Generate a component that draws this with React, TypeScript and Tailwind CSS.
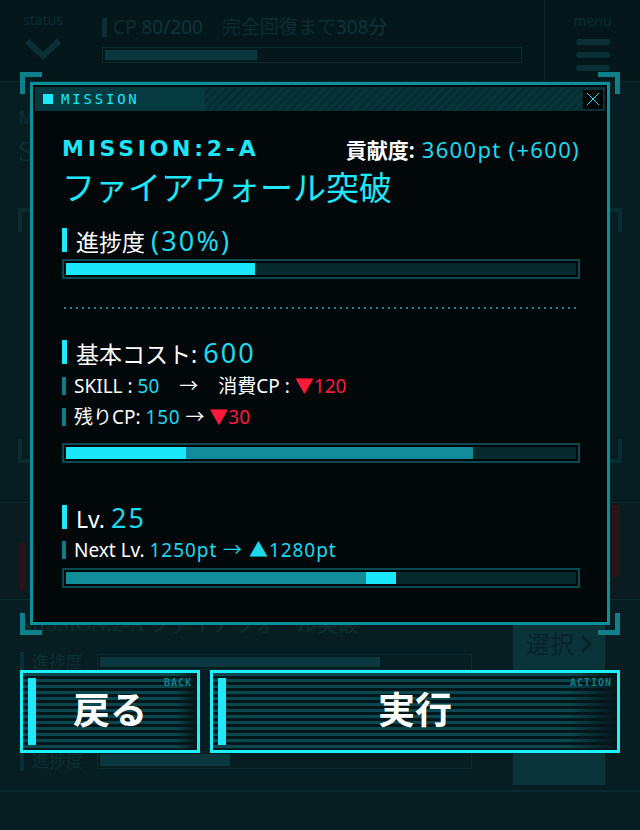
import React from 'react';

const jp = "font-['Noto_Sans','Noto_Sans_CJK_JP',sans-serif]";
const serif = "font-['Liberation_Serif','Noto_Sans_CJK_JP',serif]";

function Bar({ segs }: { segs: { w: number; c: string }[] }) {
  return (
    <div className="h-[20px] border-2 border-[#0c4a51] bg-[#02080a] p-[2px]">
      <div className="h-full bg-[#06292e] flex">
        {segs.map((s, i) => (
          <div key={i} className={`h-full ${s.c}`} style={{ width: s.w }} />
        ))}
      </div>
    </div>
  );
}

function Heading({ label, value }: { label: string; value: string }) {
  return (
    <div className="h-[26px] flex items-center gap-[9px]">
      <div className="w-[5px] h-[24px] bg-[#1ee8fa]" />
      <div className="text-[23px] leading-none text-white whitespace-nowrap">
        {label}
        <span className="text-[27px] tracking-[0.08em] text-[#1ed8ec]">{value}</span>
      </div>
    </div>
  );
}

function SubRow({ children }: { children: React.ReactNode }) {
  return (
    <div className="h-[22px] flex items-center gap-[8px]">
      <div className="w-[4px] h-[18px] bg-[#0e7c86]" />
      <div className="text-[19px] leading-none text-white whitespace-nowrap">{children}</div>
    </div>
  );
}

function Corner({ pos }: { pos: string }) {
  return <div className={`absolute w-[22px] h-[22px] border-[#0f7f89] ${pos}`} />;
}

export default function App() {
  return (
    <div className={`relative w-[640px] h-[830px] overflow-hidden bg-[#061d21] ${jp}`}>
      {/* background page */}
      <header className="h-[82px] flex bg-[#04171a] border-b border-[#0a2a2f]">
        <div className="w-[86px] flex flex-col items-center pt-[9px]">
          <span className="text-[14px] text-[#0a2b30]">status</span>
          <svg width="40" height="26" viewBox="0 0 40 26" className="mt-[6px]">
            <path d="M4 5 L20 20 L36 5" stroke="#0a3035" strokeWidth="6" fill="none" />
          </svg>
        </div>
        <div className="w-[459px] pl-[16px] pt-[18px] border-r border-[#0a2a2f]">
          <div className="flex items-center gap-[6px] text-[19px] leading-none text-[#0b2d32]">
            <div className="w-[5px] h-[19px] bg-[#0a2e33]" />
            <span>CP <span className="text-[#0c353a]">80/200</span>　完全回復まで<span className="text-[#0c353a]">308分</span></span>
          </div>
          <div className="mt-[10px] w-[420px] h-[16px] border border-[#0a2a2f] p-[2px]">
            <div className="h-full w-[152px] bg-[#0a383e]" />
          </div>
        </div>
        <div className="flex-1 flex flex-col items-center pt-[10px]">
          <span className="text-[14px] text-[#0a2b30]">menu</span>
          <div className="mt-[8px] flex flex-col gap-[7px]">
            <div className="w-[34px] h-[6px] rounded-full bg-[#0a3035]" />
            <div className="w-[34px] h-[6px] rounded-full bg-[#0a3035]" />
            <div className="w-[34px] h-[6px] rounded-full bg-[#0a3035]" />
          </div>
        </div>
      </header>

      <section className="h-[420px] px-[18px] pt-[26px] text-[#0b2c31]">
        <div className="text-[18px] tracking-[0.1em] font-bold leading-none">MISSION</div>
        <div className={`mt-[10px] text-[30px] leading-none ${serif}`}>SQL</div>
        <div className="mt-[42px] h-[255px] flex flex-col justify-between">
          <div className="flex justify-between">
            <div className="w-[12px] h-[24px] border-l-4 border-t-4 border-[#0a2b30]" />
            <div className="w-[12px] h-[24px] border-r-4 border-t-4 border-[#0a2b30]" />
          </div>
          <div className="flex justify-between">
            <div className="w-[12px] h-[24px] border-l-4 border-b-4 border-[#0a2b30]" />
            <div className="w-[12px] h-[24px] border-r-4 border-b-4 border-[#0a2b30]" />
          </div>
        </div>
      </section>

      <div className="h-[98px] border-y border-[#0a2a2f] flex px-[20px] bg-[#0a1c1f]">
        <div className="mt-[40px] w-[6px] h-[48px] bg-[#2a1318]" />
        <div className="ml-auto w-[8px] h-[72px] bg-[#2a1418] mt-[2px]" />
      </div>

      <div className="flex">
        <div className="flex-1 pl-[20px] text-[#0b2f34]">
          <div className="h-[95px] pt-[14px]">
            <div className={`text-[21px] leading-none ${serif}`}>MISSION:2-A ファイアウォール突破</div>
            <div className="mt-[14px] flex items-center gap-[8px]">
              <div className="w-[4px] h-[20px] bg-[#0a2e33]" />
              <span className="text-[17px]">進捗度</span>
              <div className="ml-[6px] w-[375px] h-[16px] border border-[#0a2a2f] p-[2px]">
                <div className="h-full w-[280px] bg-[#0a383e]" />
              </div>
            </div>
          </div>
          <div className="h-[95px] pt-[56px] flex items-start gap-[8px]">
            <div className="w-[4px] h-[20px] bg-[#0a2e33]" />
            <span className="text-[17px] leading-[20px]">進捗度</span>
            <div className="ml-[6px] w-[375px] h-[18px] border border-[#0a2a2f] p-[2px]">
              <div className="h-full w-[130px] bg-[#0a383e]" />
            </div>
          </div>
        </div>
        <div className="w-[92px] mr-[35px] mt-[20px] h-[165px] bg-[#0a3439] flex flex-col items-center pt-[12px]">
          <div className="flex items-center gap-[6px] text-[24px] leading-none text-[#06242a]">
            選択
            <svg width="12" height="20" viewBox="0 0 12 20">
              <path d="M2 2 L10 10 L2 18" stroke="#06242a" strokeWidth="3" fill="none" />
            </svg>
          </div>
        </div>
      </div>
      <div className="border-t-2 border-[#0a2a2f]" />

      {/* modal */}
      <Corner pos="left-[20px] top-[72px] border-l-[5px] border-t-[5px]" />
      <Corner pos="right-[20px] top-[72px] border-r-[5px] border-t-[5px]" />
      <Corner pos="left-[20px] top-[613px] border-l-[5px] border-b-[5px]" />
      <Corner pos="right-[20px] top-[613px] border-r-[5px] border-b-[5px]" />

      <div className="absolute left-[30px] top-[82px] w-[580px] h-[543px] border-[3px] border-[#0f8f9a] bg-[#02070a] p-[2px] flex flex-col">
        <div className="h-[24px] flex">
          <div className="w-[170px] bg-[#053a40] flex items-center pl-[8px] gap-[8px]">
            <div className="w-[10px] h-[10px] bg-[#1ee8fa]" />
            <span className="font-['DejaVu_Sans_Mono',monospace] text-[14px] tracking-[0.2em] text-[#1ee8fa] leading-none">MISSION</span>
          </div>
          <div className="flex-1 bg-[image:repeating-linear-gradient(135deg,#06353b_0px,#06353b_3px,#052d32_3px,#052d32_6px)] flex justify-end items-center pr-[2px]">
            <div className="w-[20px] h-[19px] bg-black flex items-center justify-center">
              <svg width="14" height="14" viewBox="0 0 14 14">
                <path d="M1 1 L13 13 M13 1 L1 13" stroke="#1ee8fa" strokeWidth="1" />
              </svg>
            </div>
          </div>
        </div>

        <div className="pl-[27px] pr-[25px] flex flex-col">
          <div className="mt-[25px] h-[26px] flex items-center justify-between">
            <span className="font-['DejaVu_Sans',sans-serif] font-bold text-[22px] tracking-[0.17em] text-[#1ee5f5] leading-none">MISSION:2-A</span>
            <span className="text-[21px] leading-none text-white whitespace-nowrap">
              <span className="font-bold">貢献度:</span>
              <span className="text-[22px] tracking-[0.06em] text-[#1ed8ec]"> 3600pt (+600)</span>
            </span>
          </div>
          <div className={`mt-[7px] h-[40px] flex items-center text-[33px] leading-none text-[#1ee8fa] ${serif}`}>
            ファイアウォール突破
          </div>

          <div className="mt-[18px]"><Heading label="進捗度 " value="(30%)" /></div>
          <div className="mt-[6px]"><Bar segs={[{ w: 189, c: 'bg-[#1ae8fa]' }]} /></div>

          <div className="mt-[28px] h-[2px] mx-[2px] bg-[image:repeating-linear-gradient(90deg,#0e8a94_0px,#0e8a94_2px,transparent_2px,transparent_6px)]" />

          <div className="mt-[30px]"><Heading label="基本コスト: " value="600" /></div>
          <div className="mt-[10px]">
            <SubRow>
              SKILL : <span className="text-[#1ed8ec]">50</span>
              <span className="mx-[20px]">→</span>
              消費CP : <span className="text-[#ff1a3c]">▼120</span>
            </SubRow>
          </div>
          <div className="mt-[9px]">
            <SubRow>
              残りCP: <span className="text-[#1ed8ec] tracking-[0.04em]">150</span> → <span className="text-[#ff1a3c]">▼30</span>
            </SubRow>
          </div>
          <div className="mt-[15px]">
            <Bar segs={[{ w: 120, c: 'bg-[#1ae8fa]' }, { w: 287, c: 'bg-[#128c98]' }]} />
          </div>

          <div className="mt-[41px]"><Heading label="Lv. " value="25" /></div>
          <div className="mt-[9px]">
            <SubRow>
              Next Lv. <span className="text-[#1ed8ec] tracking-[0.05em]">1250pt → ▲1280pt</span>
            </SubRow>
          </div>
          <div className="mt-[7px]">
            <Bar segs={[{ w: 300, c: 'bg-[#128c98]' }, { w: 30, c: 'bg-[#1ae8fa]' }]} />
          </div>
        </div>
      </div>

      {/* action buttons */}
      <div className="absolute left-[20px] right-[20px] top-[670px] flex gap-[10px]">
        {[
          { label: '戻る', tag: 'BACK', w: 'w-[180px]' },
          { label: '実行', tag: 'ACTION', w: 'flex-1' },
        ].map((b) => (
          <div key={b.tag} className={`relative ${b.w} h-[83px] border-[3px] border-[#1ef0fc] p-[5px] flex bg-[image:linear-gradient(to_right,transparent_88%,#041619),repeating-linear-gradient(to_bottom,#0b474e_0px,#0b474e_3px,#03171b_3px,#03171b_6px)]`}>
            <div className="w-[8px] bg-[#1ee8fa]" />
            <div className={`flex-1 flex items-center justify-center text-[37px] font-bold text-white leading-none pr-[8px] ${serif}`}>
              {b.label}
            </div>
            <span className="absolute top-[5px] right-[5px] font-['DejaVu_Sans_Mono',monospace] text-[10px] font-bold tracking-[0.1em] text-[#0e7f89] leading-none">
              {b.tag}
            </span>
          </div>
        ))}
      </div>
    </div>
  );
}
